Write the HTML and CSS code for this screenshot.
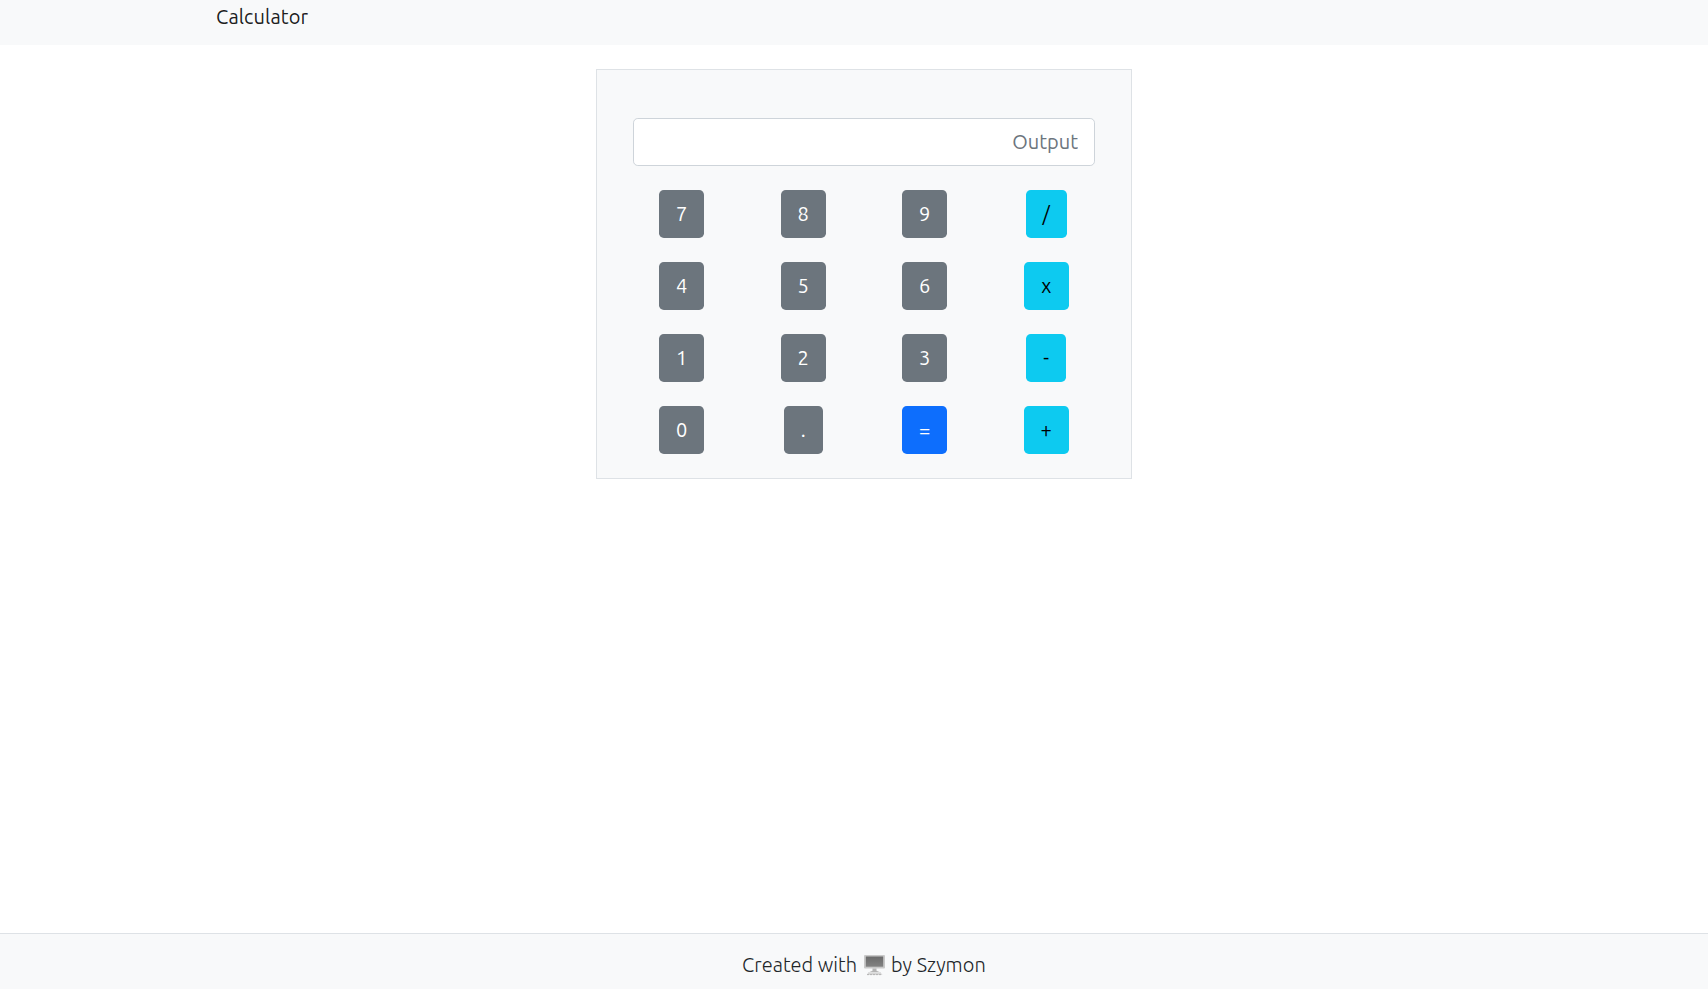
FILE: index.html
```html
<!DOCTYPE html>
<html lang="en">
<head>
<meta charset="utf-8">
<title>Calculator</title>
<link rel="stylesheet" href="styles.css">
</head>
<body>
<header class="navbar"><span class="brand">Calculator</span></header>
<main class="main">
  <section class="calculator">
    <input class="output" type="text" placeholder="Output">
    <div class="keys">
      <button class="key">7</button>
      <button class="key">8</button>
      <button class="key">9</button>
      <button class="key operator slash">/</button>
      <button class="key">4</button>
      <button class="key">5</button>
      <button class="key">6</button>
      <button class="key operator">x</button>
      <button class="key">1</button>
      <button class="key">2</button>
      <button class="key">3</button>
      <button class="key operator minus">-</button>
      <button class="key">0</button>
      <button class="key dot">.</button>
      <button class="key equals">=</button>
      <button class="key operator">+</button>
    </div>
  </section>
</main>
<footer class="footer">
  <span class="made">Created with</span>
  <svg class="computer" width="22" height="21" viewBox="0 0 22 21" aria-label="computer">
    <defs>
      <linearGradient id="screen" x1="0" y1="0" x2="0" y2="1"><stop offset="0" stop-color="#6b6b6b"/><stop offset="1" stop-color="#828282"/></linearGradient>
    </defs>
    <rect x="0" y="0" width="21" height="13.6" rx="1" fill="#c9c9c9"/>
    <rect x="1.8" y="1.5" width="17.4" height="10.2" fill="url(#screen)"/>
    <path d="M8.500 13.600h4v2.200l3 1.200H5.500l3-1.200z" fill="#b5b5b5"/>
    <path d="M4.200 17.200h12.600l1.300 2.800H3z" fill="#d6d6d6"/>
    <path d="M3 19.600h15.100" stroke="#b4b4b4" stroke-width="1" stroke-dasharray="2 1"/>
  </svg>
  <span class="author">by Szymon</span>
</footer>
</body>
</html>
```
FILE: styles.css
```css
* { box-sizing: border-box; }
body {
  margin: 0;
  min-height: 100vh;
  display: flex;
  flex-direction: column;
  background: #fff;
  color: #212529;
  font-family: Ubuntu, "Noto Sans", sans-serif;
  font-size: 20px;
}
.navbar {
  height: 45px;
  padding: 2px 0 0 216px;
  background: #f8f9fa;
  color: rgba(0, 0, 0, .9);
  line-height: 30px;
}
.brand { letter-spacing: .1px; }
.main {
  flex: 1;
  display: flex;
  justify-content: center;
  align-items: flex-start;
  padding: 24px 0 0 20px;
}
.calculator {
  width: 536px;
  height: 410px;
  padding: 48px 24px 0;
  background: #f8f9fa;
  border: 1px solid #dee2e6;
}
.output {
  display: block;
  width: 462px;
  height: 48px;
  margin: 0 12px 24px;
  padding: 7px 16px 9px;
  border: 1px solid #ced4da;
  border-radius: 4.8px;
  background: #fff;
  font: inherit;
  text-align: right;
}
.output::placeholder { color: #6c757d; opacity: 1; }
.keys {
  display: grid;
  grid-template-columns: repeat(4, 1fr);
  row-gap: 24px;
  justify-items: center;
}
.key {
  width: 45px;
  height: 48px;
  padding: 0;
  border: 0;
  border-radius: 4.8px;
  background: #6c757d;
  color: #fff;
  font: inherit;
  line-height: 48px;
}
.operator { background: #0dcaf0; color: #000; }
.equals { background: #0d6efd; }
.slash { width: 41px; }
.minus { width: 40px; }
.dot { width: 39px; }
.footer {
  height: 56px;
  padding: 15px 0 0 742px;
  display: flex;
  align-items: flex-start;
  background: #f8f9fa;
  border-top: 1px solid #dee2e6;
  font-weight: 300;
  line-height: 32px;
  white-space: nowrap;
}
.made { width: 122px; letter-spacing: .05px; }
.computer { margin-top: 6px; }
.author { margin-left: 5px; letter-spacing: .05px; }
```
